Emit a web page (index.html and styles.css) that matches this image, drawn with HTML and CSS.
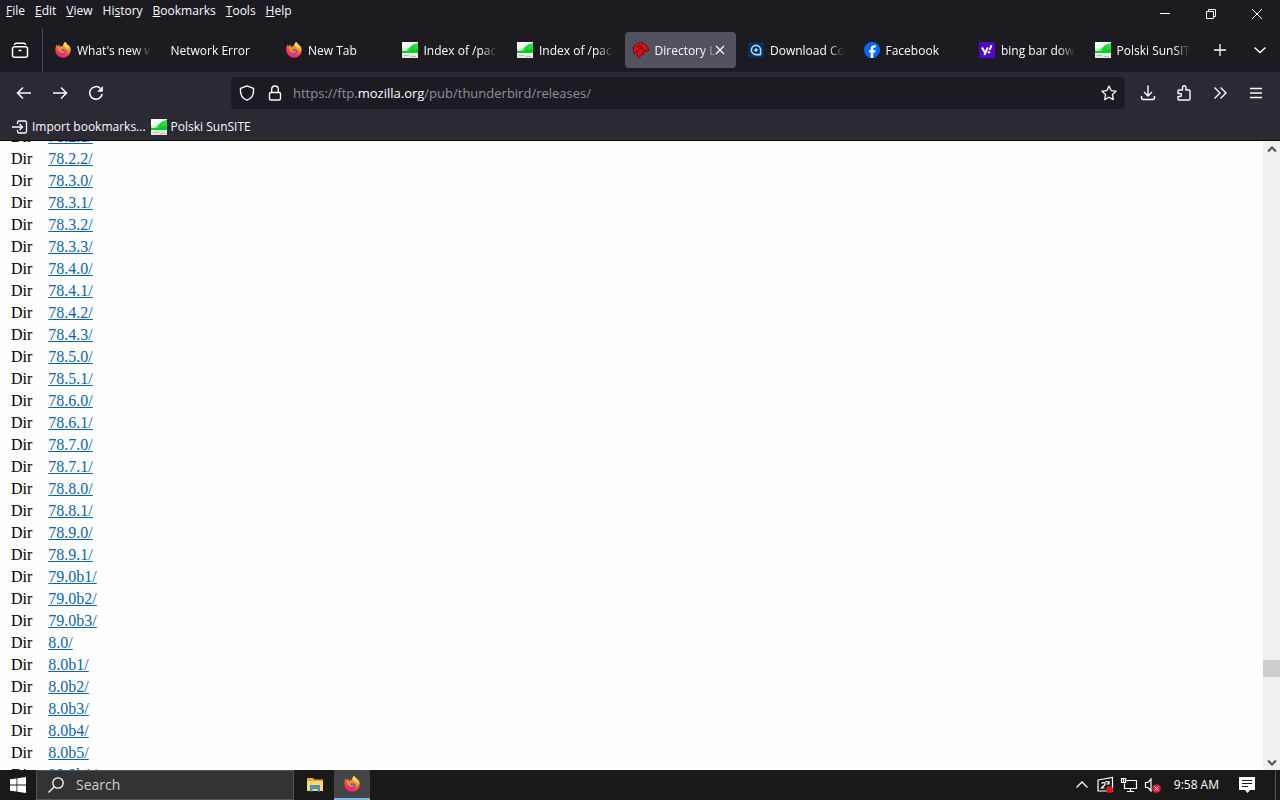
FILE: index.html
```html
<!DOCTYPE html>
<html lang="en">
<head>
<meta charset="utf-8">
<title>Directory Listing: /pub/thunderbird/releases/</title>
<link rel="stylesheet" href="styles.css">
</head>
<body>
<svg class="defs" aria-hidden="true">
  <defs>
    <linearGradient id="fx-body" x1="0.8" y1="0" x2="0.3" y2="1">
      <stop offset="0" stop-color="#ffe04a"/><stop offset="0.4" stop-color="#ff8a2b"/><stop offset="0.7" stop-color="#fb3d50"/><stop offset="1" stop-color="#d9219a"/>
    </linearGradient>
    <linearGradient id="sun-green" x1="1" y1="0" x2="0" y2="0.4">
      <stop offset="0" stop-color="#30e850"/><stop offset="0.6" stop-color="#10d828"/><stop offset="1" stop-color="#b8f8c0"/>
    </linearGradient>
  </defs>
  <symbol id="firefox" viewBox="0 0 16 16">
    <path fill="url(#fx-body)" d="M15.3 5.6c-.4-1-1.200-2-1.800-2.300.4.8.6 1.400.7 1.900C13.200 2.700 11.400 2 10.300 0 8.900.8 8.200 2.300 8.300 3.800 7.200 3.900 6.200 4.300 5.600 4.800 4.600 4.500 4.300 3.300 4.300 2.500 3.500 3 2.800 4 2.600 4.500 2.200 4 2 3 2 2.300.8 3.700.3 5.800.300 8A7.700 7.700 0 0 0 15.700 8c0-.8-.1-1.600-.4-2.400z"/>
    <path fill="#7a45d8" d="M4.200 7.500C5 6 7 6.400 8 7.200c1.500.2 2.900.4 3.300 1.600.5 1.600-1.100 3.300-3 3.300-2.600 0-4.500-2.200-4.100-4.600z"/>
    <path fill="#ff8a2b" d="M2.800 5.300c1.500-.6 3.200-.2 3.700.8l1.800.4c-.4.900-1.800 1.100-2 2 .7 1 2.600 1 4 .3-.4 1.900-2.400 2.600-4 2-2-.6-3.400-2.700-3.500-5.500z"/>
    <path fill="#ffdf45" d="M10.300 0c-1.400.8-2 2.300-1.900 3.700 1.700.2 3 1.400 3.300 3 .9-.7.900-1.700.8-2.400 1 1.400 1.300 3 1 4.700.8-.9 1.100-2.500.7-3.800C13.200 2.700 11.400 2 10.300 0z"/>
  </symbol>
  <symbol id="sunsite" viewBox="0 0 16 16">
    <path fill="#f4fff4" d="M0 0h16v16H0z"/>
    <path fill="url(#sun-green)" d="M16 1v10H0V6c3 2.500 5 2 7 0 3-3 5-4.500 9-5z"/>
    <path fill="#10c828" d="M0 8.500c2 1 5 .5 7 0L16 7v4H0z"/>
    <path fill="#e4e9e4" d="M0 11.500h16V16H0z"/><path fill="#b4beb4" d="M2 13h5v1H2zM9 14h5v1H9z"/>
  </symbol>
</svg>

<header class="chrome">
  <div class="titlebar">
    <nav class="menus" aria-label="Menu bar">
      <button><u>F</u>ile</button><button><u>E</u>dit</button><button><u>V</u>iew</button><button>Hi<u>s</u>tory</button><button><u>B</u>ookmarks</button><button><u>T</u>ools</button><button><u>H</u>elp</button>
    </nav>
    <div class="window-buttons">
      <button aria-label="Minimize"><svg class="i16" viewBox="0 0 16 16"><path d="M3 7.500h10"/></svg></button>
      <button aria-label="Restore"><svg class="i16" viewBox="0 0 16 16"><path d="M3.500 5.500h7v7h-7zM5.500 5.500v-2h7v7h-2"/></svg></button>
      <button aria-label="Close"><svg class="i16" viewBox="0 0 16 16"><path d="M3 3l10 10M13 3L3 13"/></svg></button>
    </div>
  </div>

  <div class="tabbar">
    <button class="view-button" aria-label="Recent browsing"><svg class="i18" viewBox="0 0 18 18"><path stroke-width="1.500" d="M3.500 5.700h11a2 2 0 0 1 2 2v6.600a2 2 0 0 1-2 2h-11a2 2 0 0 1-2-2V7.700a2 2 0 0 1 2-2zM3.500 4c0-1.200.8-1.800 2-1.800h7c1.200 0 2 .6 2 1.800M7.500 9.500h3"/></svg></button>
    <div class="tabs" role="tablist">
      <button class="tab" role="tab"><svg class="i16 pic"><use href="#firefox"/></svg><span class="label">What's new w</span></button>
      <button class="tab" role="tab"><span class="label">Network Error</span></button>
      <button class="tab" role="tab"><svg class="i16 pic"><use href="#firefox"/></svg><span class="label">New Tab</span></button>
      <button class="tab" role="tab"><svg class="i16 pic"><use href="#sunsite"/></svg><span class="label">Index of /pack</span></button>
      <button class="tab" role="tab"><svg class="i16 pic"><use href="#sunsite"/></svg><span class="label">Index of /pack</span></button>
      <button class="tab active" role="tab" aria-selected="true"><svg class="i16 pic" viewBox="0 0 16 16"><path fill="#e00b0b" stroke="#190000" stroke-dasharray="1 1" d="M.5 6L2 3l3-2 4-.5 3 1.500 3 3 .5 3.500-2 1.500-1-2-2 1 .5 3-3 1-1.500 3-2-1-.5-3.500 1-2-2 .5-1.500 2L.5 9z"/><path stroke="#400" d="M4 5l3-1 3 2M5 8l3-2 2 1"/></svg><span class="label">Directory L</span><svg class="i16 close" viewBox="0 0 16 16"><path stroke-width="1.200" d="M4 4l8 8M12 4l-8 8"/></svg></button>
      <button class="tab" role="tab"><svg class="i16 pic" viewBox="0 0 16 16"><rect width="16" height="16" rx="2" fill="#053258"/><path stroke="#a9dcff" stroke-width="1.600" d="M13 12.600H8A4.600 4.600 0 1 1 12.600 8v4.600"/><circle cx="8" cy="8" r="1.700" fill="#a9dcff"/></svg><span class="label">Download Co</span></button>
      <button class="tab" role="tab"><svg class="i16 pic" viewBox="0 0 16 16"><circle cx="8" cy="8" r="8" fill="#0866ff"/><path fill="#fff" d="M6.700 16v-5.400H5V8.200h1.700V7.100c0-2.700 1.200-3.900 3.800-3.900.5 0 1 .1 1.300.200v2.200h-.9c-1.200 0-1.600.5-1.600 1.700v.9h2.400l-.4 2.400h-2V16z"/></svg><span class="label">Facebook</span></button>
      <button class="tab" role="tab"><svg class="i16 pic" viewBox="0 0 16 16"><rect width="16" height="16" rx="1" fill="#5006c8"/><path stroke="#fff" stroke-width="2" d="M3 5.500l2.600 4.500M8.800 5.500L5.300 13M12.500 3l-1.800 5"/><circle cx="10" cy="10.300" r="1.200" fill="#fff"/></svg><span class="label">bing bar down</span></button>
      <button class="tab" role="tab"><svg class="i16 pic"><use href="#sunsite"/></svg><span class="label">Polski SunSITE</span></button>
    </div>
    <button class="tab-tool" aria-label="New tab"><svg class="i16" viewBox="0 0 16 16"><path stroke-width="1.300" d="M8 2v12M2 8h12"/></svg></button>
    <button class="tab-tool" aria-label="List all tabs"><svg class="i16" viewBox="0 0 16 16"><path stroke-width="1.400" d="M2.500 5.500L8 10.500l5.500-5"/></svg></button>
  </div>

  <div class="navbar">
    <div class="history">
      <button aria-label="Back"><svg class="i16" viewBox="0 0 16 16"><path stroke-width="1.500" d="M15 8H1.500M7 2.500L1.500 8 7 13.500"/></svg></button>
      <button aria-label="Forward"><svg class="i16" viewBox="0 0 16 16"><path stroke-width="1.500" d="M1 8h13.500M9 2.500L14.500 8 9 13.500"/></svg></button>
      <button aria-label="Reload"><svg class="i16" viewBox="0 0 16 16"><path stroke-width="1.500" d="M14.200 9A6.300 6.300 0 1 1 12.500 3.500"/><path fill="#fbfbfe" stroke="none" d="M14.900 1v5.700H9.200z"/></svg></button>
    </div>
    <div class="urlbar">
      <svg class="i16" viewBox="0 0 16 16"><path stroke-width="1.400" stroke-linejoin="round" d="M8 .8l6.500 2.600v2.800c0 4.300-2.900 7.600-6.500 9-3.600-1.400-6.500-4.700-6.500-9V3.400z"/></svg>
      <svg class="i16" viewBox="0 0 16 16"><rect x="2.500" y="7.500" width="11" height="7.500" rx="1.500" stroke-width="1.400"/><path stroke-width="1.400" d="M4.700 7.500V4.300a3.300 3.300 0 0 1 6.600 0v3.200"/></svg>
      <div class="url" role="textbox" aria-label="Address" contenteditable="true" spellcheck="false">https://ftp.<b>mozilla.org</b>/pub/thunderbird/releases/</div>
      <button aria-label="Bookmark this page"><svg class="i16" viewBox="0 0 16 16"><path stroke-width="1.300" stroke-linejoin="round" d="M8 1l2.100 4.600 4.900.6-3.600 3.400.9 5L8 12.200l-4.300 2.400.9-5L1 6.200l4.900-.6z"/></svg></button>
    </div>
    <div class="tools">
      <button aria-label="Downloads"><svg class="i16" viewBox="0 0 16 16"><path stroke-width="1.400" d="M8 .5v10M4 7l4 4 4-4M1.500 11v1.500a2 2 0 0 0 2 2h9a2 2 0 0 0 2-2V11"/></svg></button>
      <button aria-label="Extensions"><svg class="i16" viewBox="0 0 16 16"><path stroke-width="1.400" stroke-linejoin="round" d="M2 6a1 1 0 0 1 1-1h3.500V2.500a1.700 1.700 0 0 1 3.400 0V5H13a1 1 0 0 1 1 1v8a1 1 0 0 1-1 1H3a1 1 0 0 1-1-1v-2.500h2a1.500 1.500 0 0 0 0-3H2z"/></svg></button>
      <button aria-label="More tools"><svg class="i16" viewBox="0 0 16 16"><path stroke-width="1.400" d="M2.500 2.500L8 8l-5.500 5.500M8.500 2.500L14 8l-5.500 5.500"/></svg></button>
      <button aria-label="Application menu"><svg class="i16" viewBox="0 0 16 16"><path stroke-width="1.300" d="M2 3.500h12M2 8h12M2 12.500h12"/></svg></button>
    </div>
  </div>

  <div class="bookmarks">
    <a href="#import"><svg class="i16" viewBox="0 0 16 16"><path stroke-width="1.300" d="M5.500 5V3.500a1.500 1.500 0 0 1 1.500-1.500h6A1.500 1.500 0 0 1 14.500 3.500v9A1.500 1.500 0 0 1 13 14H7a1.500 1.500 0 0 1-1.500-1.500V11M0 8h10M7.500 5L10.500 8l-3 3"/></svg>Import bookmarks...</a>
    <a href="#sunsite-home"><svg class="i16 pic"><use href="#sunsite"/></svg>Polski SunSITE</a>
  </div>
</header>

<div class="viewport">
  <main class="listing">
    <table>
      <tbody>
        <tr><td>Dir</td><td><a href="#">78.2.1/</a></td></tr>
        <tr><td>Dir</td><td><a href="#">78.2.2/</a></td></tr>
        <tr><td>Dir</td><td><a href="#">78.3.0/</a></td></tr>
        <tr><td>Dir</td><td><a href="#">78.3.1/</a></td></tr>
        <tr><td>Dir</td><td><a href="#">78.3.2/</a></td></tr>
        <tr><td>Dir</td><td><a href="#">78.3.3/</a></td></tr>
        <tr><td>Dir</td><td><a href="#">78.4.0/</a></td></tr>
        <tr><td>Dir</td><td><a href="#">78.4.1/</a></td></tr>
        <tr><td>Dir</td><td><a href="#">78.4.2/</a></td></tr>
        <tr><td>Dir</td><td><a href="#">78.4.3/</a></td></tr>
        <tr><td>Dir</td><td><a href="#">78.5.0/</a></td></tr>
        <tr><td>Dir</td><td><a href="#">78.5.1/</a></td></tr>
        <tr><td>Dir</td><td><a href="#">78.6.0/</a></td></tr>
        <tr><td>Dir</td><td><a href="#">78.6.1/</a></td></tr>
        <tr><td>Dir</td><td><a href="#">78.7.0/</a></td></tr>
        <tr><td>Dir</td><td><a href="#">78.7.1/</a></td></tr>
        <tr><td>Dir</td><td><a href="#">78.8.0/</a></td></tr>
        <tr><td>Dir</td><td><a href="#">78.8.1/</a></td></tr>
        <tr><td>Dir</td><td><a href="#">78.9.0/</a></td></tr>
        <tr><td>Dir</td><td><a href="#">78.9.1/</a></td></tr>
        <tr><td>Dir</td><td><a href="#">79.0b1/</a></td></tr>
        <tr><td>Dir</td><td><a href="#">79.0b2/</a></td></tr>
        <tr><td>Dir</td><td><a href="#">79.0b3/</a></td></tr>
        <tr><td>Dir</td><td><a href="#">8.0/</a></td></tr>
        <tr><td>Dir</td><td><a href="#">8.0b1/</a></td></tr>
        <tr><td>Dir</td><td><a href="#">8.0b2/</a></td></tr>
        <tr><td>Dir</td><td><a href="#">8.0b3/</a></td></tr>
        <tr><td>Dir</td><td><a href="#">8.0b4/</a></td></tr>
        <tr><td>Dir</td><td><a href="#">8.0b5/</a></td></tr>
        <tr><td>Dir</td><td><a href="#">80.0b1/</a></td></tr>
      </tbody>
    </table>
  </main>
  <div class="scrollbar">
    <button aria-label="Scroll up"><svg class="i16" viewBox="0 0 16 16"><path d="M4 9.500l4-4 4 4"/></svg></button>
    <div class="before"></div><div class="thumb"></div><div class="after"></div>
    <button aria-label="Scroll down"><svg class="i16" viewBox="0 0 16 16"><path d="M4 6.500l4 4 4-4"/></svg></button>
  </div>
</div>

<footer class="taskbar">
  <button class="start" aria-label="Start"><svg class="i16" viewBox="0 0 16 16"><path fill="#fff" stroke="none" d="M0 2.300L6.500 1.400v6.200H0zM7.300 1.300L16 0v7.600H7.300zM0 8.400h6.500v6.200L0 13.700zM7.300 8.400H16V16l-8.700-1.300z"/></svg></button>
  <label class="search"><svg class="i16" viewBox="0 0 16 16"><circle cx="10" cy="6" r="5.200" stroke-width="1.300"/><path stroke-width="1.300" d="M6.300 9.700L.5 15.500"/></svg><input type="text" placeholder="Search" aria-label="Search"></label>
  <button class="app" aria-label="File Explorer"><svg class="i18 pic" viewBox="0 0 18 18"><path fill="#e9a93a" d="M1 2h6l1.500 1.500H17V15H1z"/><path fill="#ffd965" d="M1 5h16v10H1z"/><path fill="#4a8fc8" d="M4 9h10v6.500h-2.500V13h-5v2.500H4z"/></svg></button>
  <button class="app running" aria-label="Firefox"><svg class="i16 pic"><use href="#firefox"/></svg></button>
  <div class="tray">
    <button aria-label="Show hidden icons"><svg class="i16" viewBox="0 0 16 16"><path stroke-width="1.300" d="M2.500 10.500L8 5l5.500 5.500"/></svg></button>
    <button aria-label="Update status"><svg class="i18" viewBox="0 0 18 18"><path stroke-width="1.200" d="M2 4l14.500-2.500V15H2zM5.500 7.500c1.500-1.500 4-1 3.500.8-.3 1-2 2-3.500 3.700h3M13 5v3h-2.500M9.500 6c1-.8 2.500-.5 3.500 1.500"/><circle cx="13.500" cy="13.500" r="3.500" fill="#e81123" stroke="none"/></svg></button>
    <button aria-label="Network"><svg class="i18" viewBox="0 0 18 18"><path stroke-width="1.200" d="M6 4.500h10.500v8H4.500V7.500M10.500 12.500v3M7 15.500h7M1.500 2.500h4v4h-4zM3.500 2.500v4"/></svg></button>
    <button aria-label="Volume muted"><svg class="i18" viewBox="0 0 18 18"><path stroke-width="1.200" d="M1.500 6.500h2.500L7 3v12l-3-3.500H1.500z"/><circle cx="12.500" cy="12.500" r="4.300" fill="#d9243b" stroke="none"/><path d="M10.500 10.500l4 4M14.500 10.500l-4 4"/></svg></button>
    <time>9:58 AM</time>
    <button class="notify" aria-label="Notifications"><svg class="i16" viewBox="0 0 16 16"><path fill="#fff" stroke="none" d="M0 0h16v13h-5l-2.500 3L6 13H0z"/><path stroke="#191919" d="M3 3.500h10M3 6.500h10M3 9.500h6"/></svg></button>
  </div>
</footer>
</body>
</html>
```
FILE: styles.css
```css
* { box-sizing: border-box; }
body {
  margin: 0;
  height: 100vh;
  display: flex;
  flex-direction: column;
  overflow: hidden;
  background: #fff;
  font: 12px/16px "Open Sans", "Noto Sans", sans-serif;
  color: #fbfbfe;
}
button {
  display: flex;
  align-items: center;
  justify-content: center;
  padding: 0;
  border: 0;
  background: none;
  color: inherit;
  font: inherit;
}
svg { flex: none; fill: none; stroke: currentColor; }
.pic { stroke: none; }
.defs { position: absolute; width: 0; height: 0; }
.i16 { width: 16px; height: 16px; }
.i18 { width: 18px; height: 18px; }

.chrome { flex: none; background: #2b2a33; border-bottom: 1px solid #0c0c0d; }
.titlebar { display: flex; justify-content: space-between; height: 28px; background: #1c1b22; }
.menus { display: flex; gap: 10px; height: 21px; padding-left: 6px; }
.window-buttons { display: flex; }
.window-buttons button { width: 46px; }

.tabbar { display: flex; height: 44px; background: #1c1b22; }
.view-button { width: 43px; padding-right: 2px; border-right: 1px solid #4a4955; }
.tabs { flex: 1; display: flex; min-width: 0; padding: 4px 0 4px 2px; }
.tab {
  flex: 1 1 0;
  min-width: 0;
  gap: 6px;
  margin: 0 2px;
  padding: 0 8px;
  border-radius: 4px;
  justify-content: flex-start;
}
.tab.active { background: #52515e; }
.label {
  flex: 1;
  min-width: 0;
  padding-top: 1px;
  overflow: hidden;
  white-space: nowrap;
  text-align: left;
  mask-image: linear-gradient(to left, transparent, #000 16px);
}
.close { margin-left: -8px; }
.active .label { margin-right: -4px; }
.tab-tool { width: 40px; }

.navbar { display: flex; align-items: center; height: 41px; }
.history { display: flex; gap: 20px; padding: 0 127px 0 16px; }
.urlbar {
  flex: 1;
  display: flex;
  align-items: center;
  gap: 12px;
  height: 32px;
  padding: 0 8px;
  border-radius: 4px;
  background: #1c1b22;
}
.url { flex: 1; margin-left: -2px; color: #8f8f9a; font-size: 13px; white-space: nowrap; outline: 0; }
.url b { color: #fbfbfe; font-weight: 400; }
.tools { display: flex; gap: 20px; padding: 0 16px 0 15px; }

.bookmarks { display: flex; gap: 5px; height: 27px; align-items: center; padding-left: 12px; }
.bookmarks a { display: flex; gap: 4px; color: inherit; text-decoration: none; }

.viewport { flex: 1; min-height: 0; display: flex; }
.listing { flex: 1; overflow: hidden; background: #fefefe; padding-left: 11px; }
.listing table {
  margin-top: -15px;
  border-collapse: collapse;
  color: #000;
  font: 16px/20px "Liberation Serif", serif;
}
.listing td { height: 22px; padding: 1px 16px 1px 0; }
.listing a { color: #0b64ae; }
.scrollbar { width: 17px; display: flex; flex-direction: column; background: #f0f0f0; color: #505050; }
.scrollbar button { height: 17px; }
.scrollbar path { stroke-width: 2; }
.before { flex: 502; }
.thumb { height: 17px; background: #cdcdcd; }
.after { flex: 76; }

.taskbar { flex: none; display: flex; height: 30px; background: #191919; color: #fff; }
.start { width: 36px; }
.search {
  display: flex;
  align-items: center;
  gap: 12px;
  width: 258px;
  padding-left: 11px;
  border: 1px solid #555;
  background: #333;
}
.search input {
  flex: 1;
  min-width: 0;
  padding: 0;
  border: 0;
  outline: 0;
  background: none;
  color: #fff;
  font: 14px/20px "Open Sans", sans-serif;
}
.search input::placeholder { color: #d0d0d0; }
.app { width: 36px; margin-left: 3px; }
.app + .app { margin-left: 1px; }
.app.running { background: #454545; border-bottom: 2px solid #76b9ed; }
.tray { display: flex; align-items: center; gap: 6px; margin-left: auto; padding-right: 4px; }
.tray time { margin: 0 14px 0 6px; }
.notify { height: 30px; padding-right: 20px; border-right: 1px solid #555; }
```
